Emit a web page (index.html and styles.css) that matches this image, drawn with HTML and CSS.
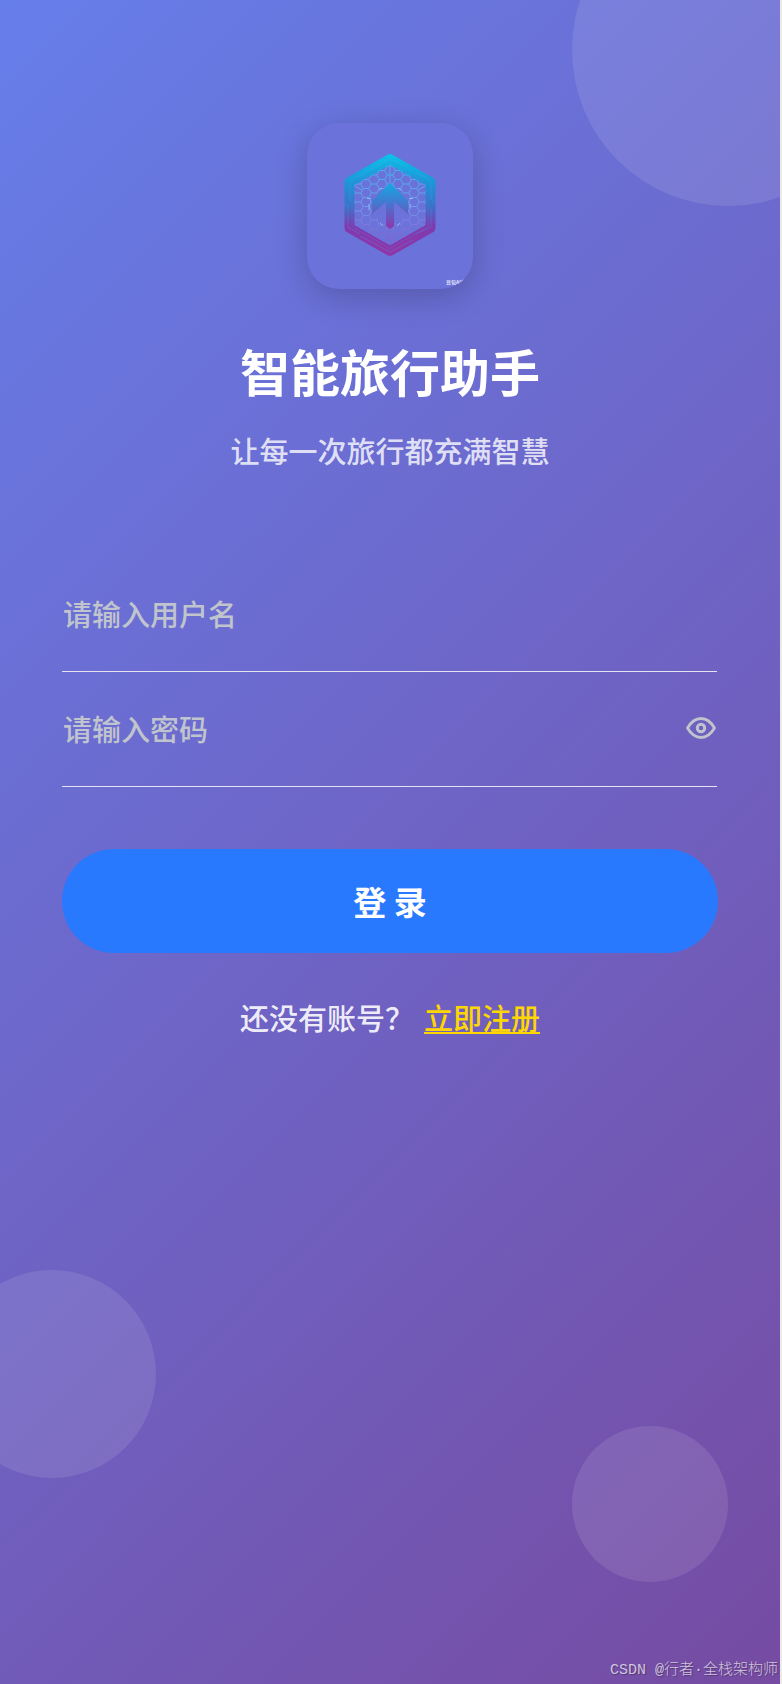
FILE: index.html
```html
<!DOCTYPE html>
<html lang="zh-CN">
<head>
<meta charset="utf-8">
<meta name="viewport" content="width=device-width, initial-scale=1">
<title>智能旅行助手</title>
<link rel="stylesheet" href="styles.css">
</head>
<body>
<main class="page">
  <span class="bubble bubble-top"></span>
  <span class="bubble bubble-left"></span>
  <span class="bubble bubble-right"></span>

  <header class="brand">
    <div class="logo">
      <svg viewBox="0 0 166 166" role="img" aria-label="智能旅行助手">
        <defs>
          <linearGradient id="frame" gradientUnits="userSpaceOnUse" x1="0" y1="31" x2="0" y2="133">
            <stop offset="0" stop-color="#08c5e8"/>
            <stop offset=".3" stop-color="#1b93d8"/>
            <stop offset=".52" stop-color="#3b72c8"/>
            <stop offset=".7" stop-color="#7d3bb0"/>
            <stop offset="1" stop-color="#9035a8"/>
          </linearGradient>
          <linearGradient id="arrow" gradientUnits="userSpaceOnUse" x1="0" y1="60" x2="0" y2="106">
            <stop offset="0" stop-color="#12aae2"/>
            <stop offset=".45" stop-color="#4577cf"/>
            <stop offset="1" stop-color="#9035aa"/>
          </linearGradient>
          <linearGradient id="mesh" gradientUnits="userSpaceOnUse" x1="0" y1="40" x2="0" y2="125">
            <stop offset="0" stop-color="#39b8ea"/>
            <stop offset=".5" stop-color="#719cea"/>
            <stop offset="1" stop-color="#8e4fc4"/>
          </linearGradient>
          <pattern id="hex" width="16" height="9" patternUnits="userSpaceOnUse" x="75" y="43">
            <path d="M0 4.500H2.700L5.300 0H10.700L13.300 4.500H16M2.700 4.500L5.300 9H10.700L13.300 4.500" fill="none" stroke="#fff" stroke-width="1"/>
          </pattern>
          <mask id="meshMask">
            <path d="M83 40L121 61V104L83 125L45 104V61Z" fill="url(#hex)"/>
            <circle cx="83" cy="83" r="18" fill="#000"/>
          </mask>
        </defs>
        <rect x="40" y="38" width="86" height="90" fill="url(#mesh)" mask="url(#meshMask)"/>
        <path d="M83 39V60M83 109V125M46 62L55 67M46 104L55 99M120 62L111 67M120 104L111 99" stroke="url(#mesh)" stroke-width="1" fill="none"/>
        <path d="M83 36L123.500 59V105L83 128L42.500 105V59Z" fill="none" stroke="url(#frame)" stroke-width="10" stroke-linejoin="round"/>
        <path d="M83 35L102 45.500M110 50L124 58V75L128 80M83 35L43 58V78M38 81L41 83V104L53 111M53 113L83 129L106 117M109 111L124 104V86" fill="none" stroke="#63a3e2" stroke-opacity=".35" stroke-width=".8"/>
        <path d="M83 38.500L121 60.500V103.500L83 125.500L45 103.500V60.500Z" fill="none" stroke="#6b72da" stroke-opacity=".4" stroke-width=".8"/>
        <path d="M83 60L101 78V91L87 79V103L83 106L79 103V79L65 91V78Z" fill="url(#arrow)"/>
        <path d="M60 75.500H64M62 81V87M102 75.500H106M103 81V85M75 65L72 67M91 65L94 67M73 100L76 103M93 100L90 103" stroke="#8fc8f5" stroke-opacity=".8" stroke-width="1" fill="none"/>
        <text class="logo-mark" x="139" y="161">豆包AI生</text>
      </svg>
    </div>
    <h1 class="title">智能旅行助手</h1>
    <p class="subtitle">让每一次旅行都充满智慧</p>
  </header>

  <form class="form">
    <div class="field">
      <input class="input" type="text" aria-label="用户名" placeholder="请输入用户名">
    </div>
    <div class="field">
      <input class="input" type="password" aria-label="密码" placeholder="请输入密码">
      <button class="eye" type="button" aria-label="显示密码">
        <svg viewBox="0 0 30 22" width="30" height="22" fill="none" stroke="currentColor">
          <path d="M1.500 11C5 5 9.500 1.500 15 1.500S25 5 28.500 11C25 17 20.500 20.500 15 20.500S5 17 1.500 11Z" stroke-width="2.800" stroke-linejoin="round"/>
          <circle cx="15" cy="11" r="3.700" stroke-width="3"/>
        </svg>
      </button>
    </div>
    <button class="submit" type="submit">登 录</button>
  </form>

  <p class="signup">还没有账号？<a class="signup-link" href="#register">立即注册</a></p>
  <footer class="credit">CSDN @行者·全栈架构师</footer>
</main>
</body>
</html>
```
FILE: styles.css
```css
* {
  box-sizing: border-box;
}

body {
  margin: 0;
  background: #ebebeb;
  font-family: "Noto Sans CJK SC", sans-serif;
  font-weight: 500;
}

.page {
  position: relative;
  display: flex;
  flex-direction: column;
  min-height: 100vh;
  margin-right: 2px;
  padding: 123px 62px 0;
  overflow: hidden;
  background: linear-gradient(135deg, #667eea 0%, #764ba2 100%);
  color: #fff;
}

.bubble {
  position: absolute;
  border-radius: 50%;
  background: rgba(255, 255, 255, 0.1);
}

.bubble-top {
  top: -106px;
  right: -104px;
  width: 312px;
  height: 312px;
}

.bubble-left {
  bottom: 206px;
  left: -52px;
  width: 208px;
  height: 208px;
}

.bubble-right {
  right: 52px;
  bottom: 102px;
  width: 156px;
  height: 156px;
}

.brand {
  display: flex;
  flex-direction: column;
  align-items: center;
}

.logo {
  width: 166px;
  height: 166px;
  overflow: hidden;
  border-radius: 32px;
  background: #6b72da;
  box-shadow: 0 8px 32px rgba(0, 0, 0, 0.2);
}

.logo svg {
  display: block;
}

.logo-mark {
  fill: #e4e4fa;
  font-size: 5px;
  font-weight: 700;
}

.title {
  margin: 46px 0 0;
  font-size: 50px;
  font-weight: 700;
  line-height: 70px;
}

.subtitle {
  margin: 24px 0 0;
  color: rgba(255, 255, 255, 0.8);
  font-size: 29px;
  line-height: 42px;
}

.form {
  display: flex;
  flex-direction: column;
  margin-top: 86px;
}

.field {
  display: flex;
  align-items: flex-start;
  height: 115px;
  margin-right: 1px;
  padding: 35px 1px 0;
  border-bottom: 1px solid #e4e4f0;
}

.input {
  flex: 1;
  min-width: 0;
  height: 42px;
  padding: 0;
  border: 0;
  outline: 0;
  background: none;
  color: #fff;
  font: inherit;
  font-size: 29px;
}

.input::placeholder {
  color: #c0c4cc;
  opacity: 1;
}

.eye {
  display: flex;
  align-items: center;
  height: 42px;
  padding: 0;
  border: 0;
  background: none;
  color: #c0c4cc;
}

.submit {
  height: 104px;
  margin-top: 62px;
  padding: 0;
  border: 0;
  border-radius: 52px;
  background: #2979ff;
  color: #fff;
  font: inherit;
  font-size: 33px;
  font-weight: 700;
}

.signup {
  display: flex;
  justify-content: center;
  gap: 10px;
  margin: 43px 0 0;
  color: rgba(255, 255, 255, 0.9);
  font-size: 29px;
  line-height: 42px;
}

.signup-link {
  color: #ffd700;
  text-decoration: underline;
}

.credit {
  margin: auto -60px 2px 0;
  color: rgba(255, 255, 255, 0.7);
  font-family: "Liberation Mono", "Noto Sans CJK SC", monospace;
  font-size: 15px;
  font-weight: 300;
  line-height: 22px;
  text-align: right;
  text-shadow: 1px 1px 1px rgba(0, 0, 0, 0.3);
}
```
